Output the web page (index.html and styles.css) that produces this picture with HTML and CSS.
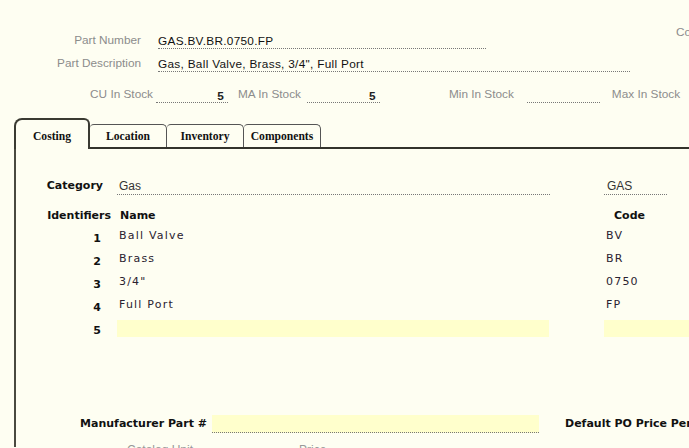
FILE: index.html
```html
<!DOCTYPE html>
<html>
<head>
<meta charset="utf-8">
<link rel="stylesheet" href="styles.css">
</head>
<body>
<div class="header">
  <div class="hleft">
    <div class="hrow">
      <span class="hlabel">Part Number</span>
      <span class="hfield w-pn">GAS.BV.BR.0750.FP</span>
    </div>
    <div class="hrow">
      <span class="hlabel">Part Description</span>
      <span class="hfield w-pd">Gas, Ball Valve, Brass, 3/4", Full Port</span>
    </div>
    <div class="hrow stock">
      <span class="hlabel s1">CU In Stock</span>
      <span class="hfield num f1">5</span>
      <span class="hlabel s2">MA In Stock</span>
      <span class="hfield num f2">5</span>
      <span class="hlabel s3">Min In Stock</span>
      <span class="hfield num f3"></span>
      <span class="hlabel s4">Max In Stock</span>
    </div>
  </div>
  <div class="hright">Cost</div>
</div>

<div class="tabs">
  <div class="tab active">Costing</div>
  <div class="tab">Location</div>
  <div class="tab">Inventory</div>
  <div class="tab">Components</div>
</div>

<div class="panel">
  <div class="grid">
    <div class="lbl cat">Category</div>
    <div class="cell"><span class="field">Gas</span></div>
    <div></div>
    <div class="cell"><span class="field code">GAS</span></div>

    <div class="lbl ident">Identifiers</div>
    <div class="cell head">Name</div>
    <div></div>
    <div class="cell head codehead">Code</div>

    <div class="lbl n">1</div>
    <div class="cell val">Ball Valve</div>
    <div></div>
    <div class="cell val">BV</div>

    <div class="lbl n">2</div>
    <div class="cell val">Brass</div>
    <div></div>
    <div class="cell val">BR</div>

    <div class="lbl n">3</div>
    <div class="cell val">3/4"</div>
    <div></div>
    <div class="cell val">0750</div>

    <div class="lbl n">4</div>
    <div class="cell val">Full Port</div>
    <div></div>
    <div class="cell val">FP</div>

    <div class="lbl n">5</div>
    <div class="cell"><span class="yfield"></span></div>
    <div></div>
    <div class="cell"><span class="yfield"></span></div>
  </div>

  <div class="mfr">
    <span class="mlabel">Manufacturer Part #</span>
    <span class="mfield"></span>
    <span class="mlabel2">Default PO Price Per</span>
  </div>

  <div class="cutrow">
    <span class="c1">Catalog Unit</span>
    <span class="c2">Price</span>
  </div>
</div>
</body>
</html>
```

FILE: styles.css
```css
html, body {
  margin: 0;
  padding: 0;
}
body {
  width: 689px;
  height: 448px;
  overflow: hidden;
  background: #fefef2;
  font-family: "Liberation Sans", Arial, sans-serif;
  color: #111;
}

/* Header */
.header {
  display: flex;
  padding-top: 34px;
  height: 85px;
  box-sizing: border-box;
}
.hleft {
  display: flex;
  flex-direction: column;
  width: 676px;
  flex: none;
}
.hright {
  font-size: 11.8px;
  color: #8c8c8c;
  margin-top: -9px;
  white-space: nowrap;
}
.hrow {
  display: flex;
  align-items: flex-end;
  height: 15px;
  margin-bottom: 8px;
}
.hrow.stock {
  margin-top: 8px;
}
.hlabel {
  font-size: 11.8px;
  color: #8c8c8c;
  width: 141px;
  text-align: right;
  line-height: 14px;
  padding-bottom: 2px;
  flex: none;
  white-space: nowrap;
}
.hfield {
  display: block;
  height: 14px;
  line-height: 14px;
  font-size: 11.8px;
  letter-spacing: 0.3px;
  color: #111;
  border-bottom: 1px dotted #777;
  margin-left: 17px;
  flex: none;
  white-space: nowrap;
}
.w-pn { width: 328px; }
.w-pd { width: 472px; }

.num {
  text-align: right;
  padding-right: 4px;
  box-sizing: border-box;
  font-weight: bold;
  color: #222;
}
.stock .s1 { width: 153px; }
.stock .f1 { margin-left: 3px; width: 72px; }
.stock .s2 { width: auto; margin-left: 10px; }
.stock .f2 { margin-left: 6px; width: 73px; }
.stock .s3 { width: auto; margin-left: 69px; }
.stock .f3 { margin-left: 13px; width: 73px; }
.stock .s4 { width: auto; margin-left: 12px; }

/* Tabs */
.tabs {
  display: flex;
  align-items: flex-end;
  margin-left: 14px;
  margin-top: 33px;
  position: relative;
  z-index: 1;
  height: 29px;
}
.tab {
  font-family: "Liberation Serif", "Times New Roman", serif;
  font-weight: bold;
  font-size: 11.6px;
  color: #111;
  width: 77px;
  height: 23px;
  box-sizing: border-box;
  border: 1px solid #555;
  border-bottom: none;
  border-left: none;
  border-radius: 4px 5px 0 0;
  text-align: center;
  line-height: 24px;
}
.tab.active {
  width: 76px;
  height: 31px;
  border: 2px solid #3a3a32;
  border-bottom: none;
  border-radius: 8px 6px 0 0;
  background: #fefef2;
  margin-bottom: -2px;
  line-height: 33px;
}

/* Panel */
.panel {
  margin-left: 14px;
  border-top: 2px solid #33332b;
  border-left: 2px solid #4a4a40;
  height: 300px;
  padding-top: 25px;
  box-sizing: border-box;
}
.grid {
  display: grid;
  grid-template-columns: 101px 433px 54px 90px;
  grid-template-rows: 23px 28px repeat(5, 23px);
}
.lbl {
  font-family: "DejaVu Sans", Verdana, sans-serif;
  font-weight: bold;
  font-size: 11px;
  color: #111;
  text-align: right;
  display: flex;
  align-items: center;
  justify-content: flex-end;
  white-space: nowrap;
}
.lbl.cat { padding-right: 14px; }
.lbl.ident { padding-right: 6px; padding-top: 8px; }
.lbl.n { padding-right: 16px; padding-top: 4px; }

.cell {
  display: flex;
  align-items: center;
  font-family: "DejaVu Sans", Verdana, sans-serif;
  font-size: 11px;
  white-space: nowrap;
}
.head {
  font-weight: bold;
  padding-left: 3px;
  padding-top: 8px;
  color: #111;
}
.codehead { padding-left: 10px; }
.val {
  letter-spacing: 1.2px;
  color: #2a2230;
  padding-left: 2px;
  padding-bottom: 2px;
}
.field {
  display: block;
  width: 432px;
  height: 15px;
  line-height: 15px;
  font-family: "Liberation Sans", Arial, sans-serif;
  font-size: 12px;
  color: #333;
  padding-left: 2px;
  box-sizing: content-box;
  border-bottom: 1px dotted #777;
  margin-top: 2px;
}
.field.code {
  width: 60px;
  padding-left: 3px;
}
.yfield {
  display: block;
  width: 432px;
  height: 17px;
  background: #ffffcc;
}
.cell:last-child .yfield { width: 90px; }

/* Manufacturer row */
.mfr {
  display: flex;
  align-items: center;
  margin-top: 72px;
  height: 23px;
}
.mlabel, .mlabel2 {
  font-family: "DejaVu Sans", Verdana, sans-serif;
  font-weight: bold;
  font-size: 11px;
  color: #111;
  white-space: nowrap;
}
.mlabel {
  width: 191px;
  text-align: right;
  flex: none;
}
.mfield {
  display: block;
  width: 327px;
  height: 17px;
  background: #ffffcc;
  border-bottom: 1px dotted #777;
  margin-left: 5px;
  flex: none;
}
.mlabel2 { margin-left: 26px; }

.cutrow {
  display: flex;
  margin-top: 8px;
  font-size: 12px;
  color: #999;
  white-space: nowrap;
}
.cutrow .c1 { margin-left: 111px; }
.cutrow .c2 { margin-left: 106px; }
```
